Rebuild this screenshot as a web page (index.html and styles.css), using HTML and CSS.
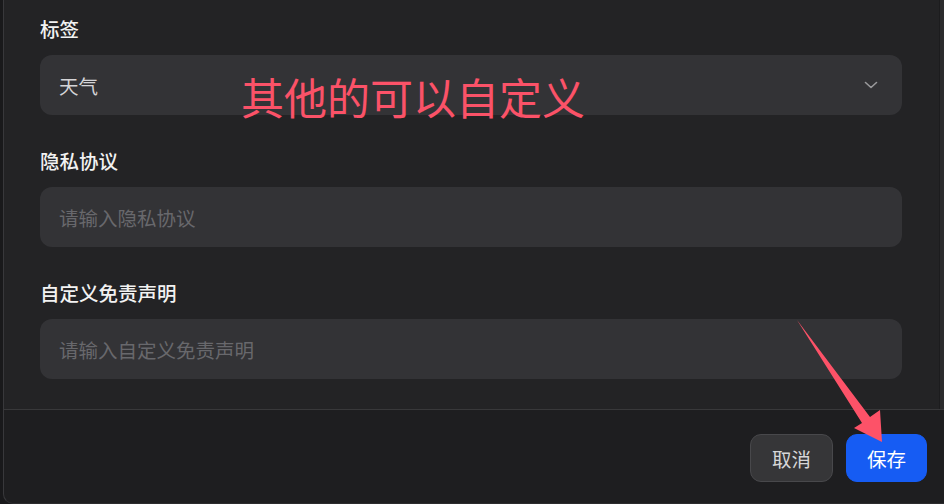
FILE: index.html
```html
<!DOCTYPE html>
<html lang="zh-CN">
<head>
<meta charset="utf-8">
<link rel="stylesheet" href="styles.css">
</head>
<body>
<div class="modal">
  <div class="modal-body">
    <div class="content">
      <div class="form-item">
        <div class="label">标签</div>
        <div class="field select">
          <span class="value">天气</span>
          <svg class="chevron" width="14" height="8" viewBox="0 0 14 8"><path d="M1.5 1.5 L7 6.5 L12.5 1.5" fill="none" stroke="#9a9a9c" stroke-width="1.6" stroke-linecap="round" stroke-linejoin="round"/></svg>
        </div>
      </div>
      <div class="form-item">
        <div class="label">隐私协议</div>
        <div class="field"><span class="placeholder">请输入隐私协议</span></div>
      </div>
      <div class="form-item">
        <div class="label">自定义免责声明</div>
        <div class="field"><span class="placeholder">请输入自定义免责声明</span></div>
      </div>
    </div>
    <div class="scroll-track"></div>
  </div>
  <div class="modal-footer">
    <button class="btn btn-cancel">取消</button>
    <button class="btn btn-primary">保存</button>
  </div>
</div>
<div class="note">其他的可以自定义</div>
<svg class="arrow" width="944" height="504" viewBox="0 0 944 504"><polygon points="797,320 870,417 880,410 882,442 854,428 862,423" fill="#fd5268"/></svg>
</body>
</html>
```

FILE: styles.css
```css
html, body {
  margin: 0;
  padding: 0;
}
body {
  width: 944px;
  height: 504px;
  overflow: hidden;
  background: #19191b;
  font-family: "Noto Sans CJK SC", "Noto Sans", sans-serif;
  position: relative;
}
.modal {
  margin-left: 3px;
  width: 941px;
  height: 504px;
  box-sizing: border-box;
  border-left: 1px solid #38383b;
  border-bottom: 1px solid #2c2c2e;
  border-bottom-left-radius: 10px;
  overflow: hidden;
  display: flex;
  flex-direction: column;
  background: #1e1e20;
}
.modal-body {
  height: 409px;
  display: flex;
  background: #232325;
}
.content {
  flex: 1;
  padding: 18px 37px 0 36px;
}
.scroll-track {
  width: 4px;
  border-left: 1px solid #1c1c1e;
  background: #2b2b2d;
}
.form-item {
  margin-bottom: 35px;
}
.label {
  font-size: 19.5px;
  line-height: 22px;
  font-weight: 500;
  color: #f2f2f2;
  margin-bottom: 15px;
}
.field {
  height: 60px;
  box-sizing: border-box;
  border-radius: 12px;
  background: #333336;
  display: flex;
  align-items: center;
  padding: 0 24px 0 19px;
  font-size: 19.5px;
}
.select {
  justify-content: space-between;
}
.value {
  color: #d4d4d6;
}
.placeholder {
  color: #68686c;
}
.chevron {
  display: block;
}
.modal-footer {
  border-top: 1px solid #38383a;
  flex: 1;
  display: flex;
  justify-content: flex-end;
  align-items: flex-start;
  gap: 13px;
  padding: 24px 17px 0 0;
}
.btn {
  height: 48px;
  box-sizing: border-box;
  border-radius: 11px;
  font-family: "Noto Sans CJK SC", "Noto Sans", sans-serif;
  font-size: 19.5px;
  padding: 0 21px;
  border: 1px solid transparent;
  cursor: pointer;
}
.btn-cancel {
  background: #363638;
  border-color: #48484b;
  color: #d6d6d8;
}
.btn-primary {
  background: #165cf3;
  border-color: #165cf3;
  color: #ffffff;
  padding: 0 20px;
}
.note {
  position: absolute;
  left: 241px;
  top: 70px;
  font-size: 43px;
  line-height: 52px;
  color: #fb5268;
  white-space: nowrap;
}
.arrow {
  position: absolute;
  left: 0;
  top: 0;
  pointer-events: none;
}
```
